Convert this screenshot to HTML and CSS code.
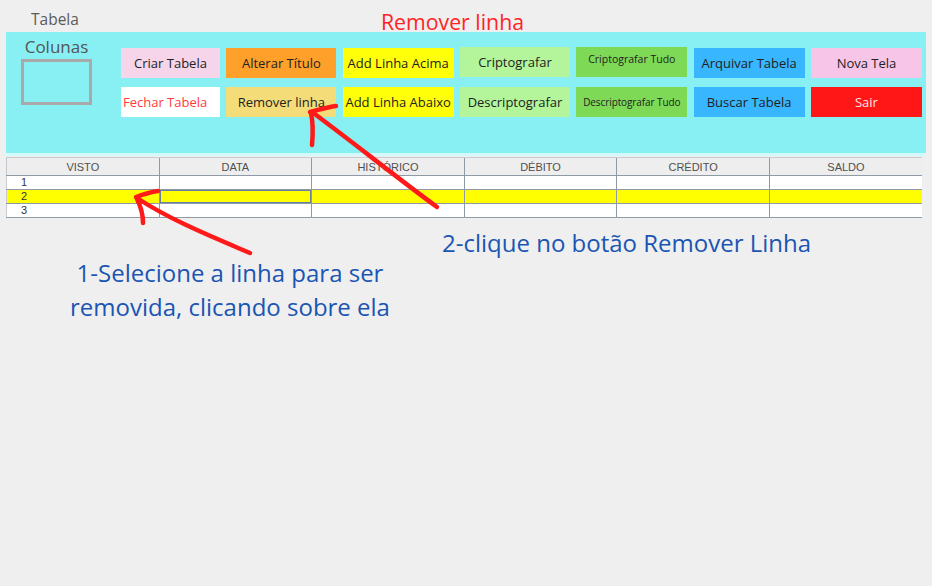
FILE: index.html
```html
<!DOCTYPE html>
<html lang="pt">
<head>
<meta charset="utf-8">
<title>Remover linha</title>
<link rel="stylesheet" href="styles.css">
</head>
<body>
<div class="page">
  <header class="top">
    <span class="app-name">Tabela</span>
    <h1 class="page-title">Remover linha</h1>
  </header>

  <section class="panel">
    <div class="cols">
      <div class="cols-label">Colunas</div>
      <div class="cols-box"></div>
    </div>
    <div class="buttons">
      <div class="btn b-pink">Criar Tabela</div>
      <div class="btn b-orange">Alterar Título</div>
      <div class="btn b-yellow">Add Linha Acima</div>
      <div class="btn b-lgreen up">Criptografar</div>
      <div class="btn b-green up small">Criptografar Tudo</div>
      <div class="btn b-blue">Arquivar Tabela</div>
      <div class="btn b-pink2">Nova Tela</div>

      <div class="btn b-white left">Fechar Tabela</div>
      <div class="btn b-sand">Remover linha</div>
      <div class="btn b-yellow">Add Linha Abaixo</div>
      <div class="btn b-lgreen">Descriptografar</div>
      <div class="btn b-green tiny">Descriptografar Tudo</div>
      <div class="btn b-blue">Buscar Tabela</div>
      <div class="btn b-red">Sair</div>
    </div>
  </section>

  <table class="grid">
    <thead>
      <tr><th>VISTO</th><th>DATA</th><th>HISTÓRICO</th><th>DÉBITO</th><th>CRÉDITO</th><th>SALDO</th></tr>
    </thead>
    <tbody>
      <tr><td class="num">1</td><td></td><td></td><td></td><td></td><td></td></tr>
      <tr class="sel"><td class="num">2</td><td class="focus"></td><td></td><td></td><td></td><td></td></tr>
      <tr><td class="num">3</td><td></td><td></td><td></td><td></td><td></td></tr>
    </tbody>
  </table>

  <section class="notes">
    <p class="note note-1">1-Selecione a linha para ser<br>removida, clicando sobre ela</p>
    <p class="note note-2">2-clique no botão Remover Linha</p>
  </section>

  <svg class="arrows" width="932" height="586" viewBox="0 0 932 586" aria-hidden="true">
    <g fill="none" stroke="#ff1a1a" stroke-width="4.5" stroke-linecap="round" stroke-linejoin="round">
      <path d="M437 207 C 400 180, 350 140, 312 112"/>
      <path d="M310 112 C 318 110, 328 107, 336 106"/>
      <path d="M311 113 C 313 122, 313 134, 312 145"/>
      <path d="M250 253 C 215 238, 170 220, 137 198"/>
      <path d="M136 197 C 144 194, 151 192, 158 191"/>
      <path d="M137 199 C 141 207, 143 215, 143 223"/>
    </g>
  </svg>
</div>
</body>
</html>
```

FILE: styles.css
```css
* { box-sizing: border-box; }

html, body {
  margin: 0;
  padding: 0;
  background: #efefef;
}

body {
  font-family: "Open Sans", "Noto Sans", sans-serif;
  color: #222;
}

.page {
  position: relative;
  width: 932px;
  height: 586px;
  overflow: hidden;
}

.top {
  display: flex;
  align-items: flex-start;
  height: 32px;
}

.app-name {
  margin: 9px 0 0 31px;
  font-size: 15.5px;
  line-height: 20px;
  color: #5a5a5a;
}

.page-title {
  margin: 8px 0 0 302px;
  font-size: 21.3px;
  line-height: 28px;
  font-weight: normal;
  color: #ff2424;
}

.panel {
  display: flex;
  margin-left: 6px;
  width: 920px;
  height: 124px;
  background: #88eff3;
  border-bottom: 3px solid #d3f9fb;
}

.cols {
  width: 115px;
  padding-left: 15px;
  padding-top: 4px;
}

.cols-label {
  width: 71px;
  text-align: center;
  font-size: 17px;
  line-height: 22px;
  color: #555;
}

.cols-box {
  width: 71px;
  height: 46px;
  margin-top: 1px;
  border: 3px solid #a9a9a9;
}

.buttons {
  display: grid;
  grid-template-columns: 99px 110px 111px 110px 111px 111px 111px;
  grid-template-rows: 30px 30px;
  column-gap: 6.33px;
  row-gap: 9px;
  padding-top: 16px;
}

.btn {
  display: flex;
  align-items: center;
  justify-content: center;
  font-size: 13px;
  white-space: nowrap;
  color: #222;
}

.btn.up { margin-top: -1px; margin-bottom: 1px; }
.btn.small { font-size: 10.5px; align-items: flex-start; padding-top: 5px; }
.btn.tiny { font-size: 10px; letter-spacing: -0.1px; }
.btn.left { justify-content: flex-start; padding-left: 2px; }

.b-pink   { background: #f6d4ea; }
.b-orange { background: #ffa02a; }
.b-yellow { background: #ffff0a; }
.b-lgreen { background: #b4f59b; }
.b-green  { background: #7ed957; }
.b-blue   { background: #38b6ff; }
.b-pink2  { background: #f7c5e8; }
.b-white  { background: #ffffff; color: #ff3b3b; }
.b-sand   { background: #f4dc78; }
.b-red    { background: #ff1616; color: #ffe6e6; }

.grid {
  margin: 1px 0 0 6px;
  width: 916px;
  border-collapse: collapse;
  table-layout: fixed;
  font-family: "Liberation Sans", Arial, sans-serif;
  font-size: 11px;
}

.grid th {
  height: 18px;
  padding: 0;
  background: #eeeeee;
  color: #505050;
  font-weight: normal;
  border-top: 1px solid #c8ccd0;
  border-left: 1px solid #8e9aa6;
  border-bottom: 1px solid #8e9aa6;
}

.grid th:first-child { border-left: 1px solid #c0c6cc; }

.grid td {
  height: 14px;
  padding: 0;
  background: #fff;
  border-left: 1px solid #8e9aa6;
  border-bottom: 1px solid #8e9aa6;
  line-height: 11px;
  color: #333;
}

.grid td:first-child { border-left: 1px solid #c8ccd0; }

.grid td.num { padding-left: 14px; }

.grid tr.sel td {
  background: #ffff00;
  border-top: 1px solid #a8adb2;
}

.grid td.focus {
  box-shadow: inset 0 0 0 1px #6b7ea3;
}

.notes {
  display: flex;
  align-items: flex-start;
}

.note {
  margin: 0;
  font-size: 24px;
  color: #1b55b3;
}

.note-1 {
  width: 340px;
  margin-left: 60px;
  margin-top: 38px;
  text-align: center;
  line-height: 34px;
}

.note-2 {
  margin-left: 42px;
  margin-top: 10px;
  line-height: 30px;
  white-space: nowrap;
}

.arrows {
  position: absolute;
  left: 0;
  top: 0;
  pointer-events: none;
}
```
